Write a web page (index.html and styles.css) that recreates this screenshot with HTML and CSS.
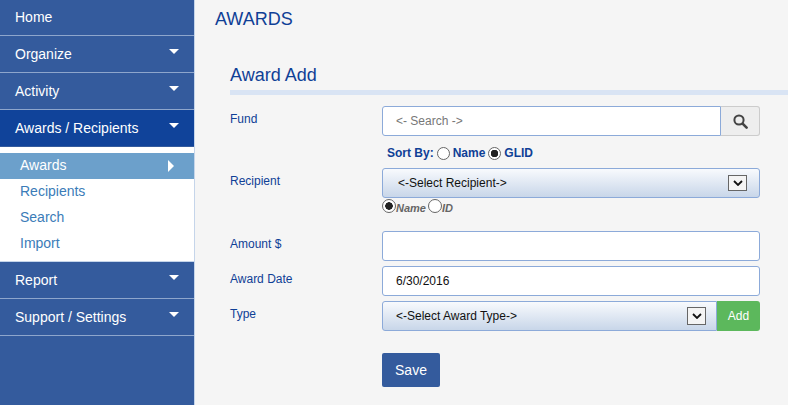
FILE: index.html
```html
<!DOCTYPE html>
<html lang="en">
  <head>
    <meta charset="UTF-8" />
    <meta name="viewport" content="width=device-width, initial-scale=1.0" />
    <title>Awards</title>
    <link rel="stylesheet" href="styles.css">
  </head>
  <body>
    <nav class="sidebar">
      <a class="nav-item">Home</a>
      <a class="nav-item has-sub">Organize</a>
      <a class="nav-item has-sub">Activity</a>
      <a class="nav-item has-sub active">Awards / Recipients</a>
      <div class="subnav">
        <a class="sub-item current">Awards</a>
        <a class="sub-item">Recipients</a>
        <a class="sub-item">Search</a>
        <a class="sub-item">Import</a>
      </div>
      <a class="nav-item has-sub">Report</a>
      <a class="nav-item has-sub">Support / Settings</a>
    </nav>

    <main class="content">
      <h1>AWARDS</h1>
      <section class="panel">
        <h2>Award Add</h2>
        <form class="award-form">
          <label class="field-label">Fund</label>
          <div class="input-group">
            <input class="text-input search-input" type="text" placeholder="<- Search ->" />
            <button class="search-btn" type="button" aria-label="Search">
              <svg width="15" height="15" viewBox="0 0 15 15">
                <circle cx="6" cy="6" r="4.6" fill="none" stroke="#444" stroke-width="2" />
                <path d="M9.6 9.6 13.6 13.6" stroke="#444" stroke-width="2.6" stroke-linecap="round" />
              </svg>
            </button>
          </div>

          <div class="sort-row">
            Sort By:
            <input class="radio" type="radio" name="sort" /> Name
            <input class="radio" type="radio" name="sort" checked /> GLID
          </div>

          <label class="field-label">Recipient</label>
          <div class="select-box">
            <span class="select-text">&lt;-Select Recipient-&gt;</span>
            <span class="select-arrow">
              <svg width="10" height="6" viewBox="0 0 10 6"><path d="M1 1 5 5 9 1" fill="none" stroke="#111" stroke-width="1.8" /></svg>
            </span>
          </div>

          <div class="match-row">
            <input class="radio" type="radio" name="match" checked /><span class="match-text">Name</span>
            <input class="radio" type="radio" name="match" /><span class="match-text">ID</span>
          </div>

          <label class="field-label">Amount $</label>
          <input class="text-input" type="text" />

          <label class="field-label">Award Date</label>
          <input class="text-input" type="text" value="6/30/2016" />

          <label class="field-label">Type</label>
          <div class="input-group">
            <div class="select-box type-select">
              <span class="select-text">&lt;-Select Award Type-&gt;</span>
              <span class="select-arrow">
                <svg width="10" height="6" viewBox="0 0 10 6"><path d="M1 1 5 5 9 1" fill="none" stroke="#111" stroke-width="1.8" /></svg>
              </span>
            </div>
            <button class="add-btn" type="button">Add</button>
          </div>

          <div class="form-actions">
            <button class="save-btn" type="button">Save</button>
          </div>
        </form>
      </section>
    </main>
  </body>
</html>
```

FILE: styles.css
```css
* {
  box-sizing: border-box;
}

html,
body {
  height: 100%;
}

body {
  margin: 0;
  display: flex;
  overflow: hidden;
  font-family: "Liberation Sans", Arial, sans-serif;
  background-color: #f5f5f5;
  color: #0f4096;
}

.sidebar {
  flex: 0 0 195px;
  background-color: #345b9d;
  border-right: 1px solid #c5d5ea;
}

.nav-item {
  display: block;
  position: relative;
  height: 37px;
  padding: 10px 0 0 15px;
  font-size: 14px;
  line-height: 17px;
  color: #fff;
  border-bottom: 1px solid #8ea6cc;
}

.nav-item:first-child {
  height: 36px;
  padding-top: 9px;
}

.nav-item.has-sub::after {
  content: "";
  position: absolute;
  top: 13px;
  right: 15px;
  border-style: solid;
  border-width: 5px 5px 0;
  border-color: #fff transparent transparent;
}

.nav-item.active {
  background-color: #10439a;
  border-bottom-color: #345b9d;
}

.subnav {
  padding: 6px 0 4px;
  background-color: #fff;
  border-bottom: 1px solid #c5d5ea;
}

.sub-item {
  display: block;
  position: relative;
  height: 26px;
  padding: 4px 0 0 20px;
  font-size: 14px;
  line-height: 17px;
  color: #3b7cb8;
}

.sub-item.current {
  background-color: #6ca0cb;
  color: #fff;
}

.sub-item.current::after {
  content: "";
  position: absolute;
  top: 7px;
  right: 20px;
  border-style: solid;
  border-width: 6px 0 6px 6px;
  border-color: transparent transparent transparent #fff;
}

.content {
  flex: 1;
  padding: 10px 0 0 20px;
}

h1 {
  margin: 0;
  font-size: 18px;
  line-height: 19px;
  font-weight: normal;
}

.panel {
  margin-top: 36px;
  padding-left: 15px;
}

h2 {
  margin: 0;
  height: 25px;
  font-size: 18px;
  line-height: 20px;
  font-weight: normal;
  border-bottom: 5px solid #d9e4f4;
  box-sizing: content-box;
}

.award-form {
  display: grid;
  grid-template-columns: 152px 378px;
  margin-top: 11px;
}

.field-label {
  padding-top: 6px;
  font-size: 12px;
  line-height: 15px;
}

.text-input {
  width: 100%;
  height: 30px;
  padding: 0 13px;
  font-family: inherit;
  font-size: 12px;
  color: #111;
  background-color: #fff;
  border: 1px solid #8caad9;
  border-radius: 3px;
  outline: none;
}

.text-input::placeholder {
  color: #777;
  opacity: 1;
}

.input-group {
  display: flex;
}

.search-input {
  flex: 1;
  border-radius: 3px 0 0 3px;
}

.search-btn {
  flex: 0 0 39px;
  display: flex;
  align-items: center;
  justify-content: center;
  padding: 0;
  background-color: #eee;
  border: 1px solid #ccc;
  border-left: none;
  border-radius: 0 3px 3px 0;
}

.sort-row {
  grid-column: 2;
  display: flex;
  align-items: center;
  gap: 3px;
  height: 32px;
  padding: 2px 0 0 5px;
  font-size: 12px;
  font-weight: bold;
}

.radio {
  appearance: none;
  flex: none;
  width: 13px;
  height: 13px;
  margin: 0;
  background-color: #fff;
  border: 1px solid #666;
  border-radius: 50%;
}

.radio:checked {
  background: radial-gradient(circle, #222 0 3.5px, #fff 4px);
}

.select-box {
  display: flex;
  align-items: center;
  justify-content: space-between;
  height: 30px;
  padding: 0 12px 0 15px;
  font-size: 12px;
  color: #111;
  background: linear-gradient(#f8fafd, #c8d6e9);
  border: 1px solid #8caad9;
  border-radius: 3px;
}

.select-arrow {
  display: flex;
  align-items: center;
  justify-content: center;
  width: 19px;
  height: 16px;
  background-color: #f4f4f4;
  border: 1px solid #666;
}

.match-row {
  grid-column: 2;
  display: flex;
  align-items: flex-start;
  height: 33px;
  font-size: 11px;
  font-style: italic;
  font-weight: bold;
  color: #666;
}

.match-row .radio {
  width: 14px;
  height: 14px;
  margin-top: 1px;
}

.match-text {
  margin-top: 4px;
  margin-right: 2px;
}

.award-form > .text-input {
  margin-bottom: 5px;
}

.type-select {
  flex: 1;
  padding: 0 10px 0 13px;
  border-radius: 3px 0 0 3px;
}

.type-select .select-arrow {
  height: 18px;
}

.add-btn {
  flex: 0 0 43px;
  padding: 0;
  font-family: inherit;
  font-size: 12px;
  color: #fff;
  background-color: #5cb85c;
  border: none;
  border-radius: 0 3px 3px 0;
}

.form-actions {
  grid-column: 2;
  margin-top: 22px;
}

.save-btn {
  width: 58px;
  height: 34px;
  padding: 0;
  font-family: inherit;
  font-size: 14px;
  color: #fff;
  background-color: #345b9d;
  border: none;
  border-radius: 2px;
}
```
